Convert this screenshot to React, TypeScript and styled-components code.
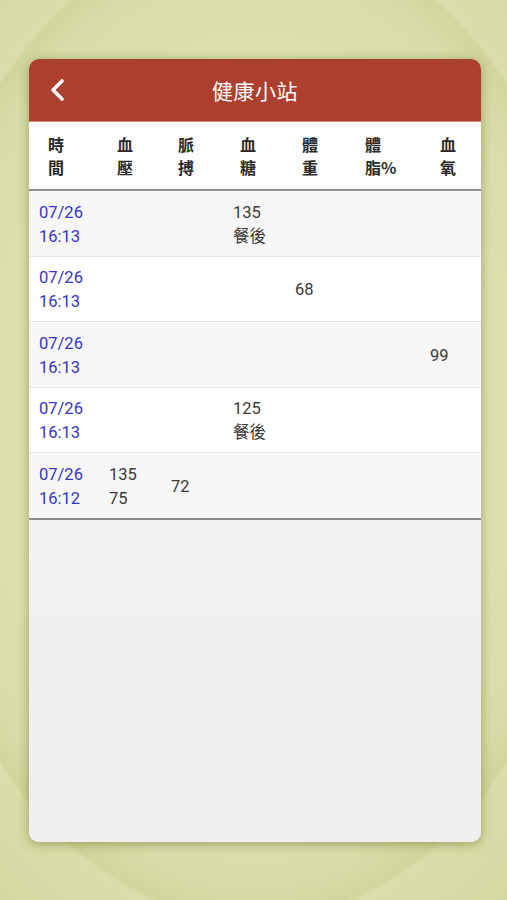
import React from 'react';
import styled, { createGlobalStyle } from 'styled-components';

const GlobalStyle = createGlobalStyle`
  html, body {
    margin: 0;
    padding: 0;
    height: 100%;
  }
  body {
    font-family: Roboto, "Noto Sans CJK TC", sans-serif;
    background-color: #d4d8a0;
    background-image: radial-gradient(
      ellipse 68% 55% at 50% 47%,
      #e3e6ba 0%,
      #dfe2b0 70%,
      #dadda9 92%,
      #d2d69d 100%,
      #dbdeaa 101%,
      #d3d79f 125%
    );
  }
`;

const Page = styled.div`
  min-height: 900px;
  box-sizing: border-box;
  padding: 59px 26px 58px 29px;
  display: flex;
`;

const Card = styled.div`
  width: 452px;
  height: 783px;
  border-radius: 10px;
  overflow: hidden;
  background: #f0f0f0;
  box-shadow: 0 2px 12px rgba(110, 120, 45, 0.6);
  display: flex;
  flex-direction: column;
`;

const TopBar = styled.div`
  height: 62px;
  flex: none;
  background: #ad3f2f;
  border-bottom: 1px solid #d98b80;
  display: grid;
  grid-template-columns: 60px 1fr 60px;
  align-items: center;
`;

const BackButton = styled.button`
  background: none;
  border: none;
  padding: 0 0 0 20px;
  display: flex;
  align-items: center;
  height: 100%;
  cursor: pointer;
`;

const Title = styled.h1`
  margin: 0;
  text-align: center;
  color: #ffffff;
  font-size: 21px;
  font-weight: 400;
  font-family: "Noto Sans CJK TC", sans-serif;
  letter-spacing: 0.5px;
`;

const columns = '70px 62px 62px 62px 62px 73px 1fr';

const HeadRow = styled.div`
  display: grid;
  grid-template-columns: ${columns};
  height: 67px;
  flex: none;
  align-items: center;
  background: #fdfdfd;
  border-bottom: 2px solid #8c8c8c;
`;

const HeadCell = styled.div<{ $pad: number }>`
  padding-left: ${p => p.$pad}px;
  font-family: "Noto Sans CJK TC", sans-serif;
  font-weight: 700;
  font-size: 16px;
  line-height: 23px;
  color: #2a2a2a;
`;

const Row = styled.div<{ $shade: boolean; $last: boolean }>`
  display: grid;
  grid-template-columns: ${columns};
  height: 64.5px;
  flex: none;
  align-items: center;
  background: ${p => (p.$shade ? '#f7f7f7' : '#ffffff')};
  border-bottom: ${p => (p.$last ? '2px solid #8c8c8c' : '1px solid #e4e4e4')};
`;

const Cell = styled.div<{ $time?: boolean }>`
  padding: 3px 0 0 10px;
  font-size: 16.5px;
  line-height: 24px;
  color: ${p => (p.$time ? '#3434c6' : '#3a3a3a')};
  font-family: Roboto, "Noto Sans CJK TC", sans-serif;
`;

const Rest = styled.div`
  flex: 1;
  background: linear-gradient(#f3f3f3 0, #f2f2f2 70px, #f0f0f0 110px);
`;

const headers: { lines: string[]; pad: number }[] = [
  { lines: ['時', '間'], pad: 19 },
  { lines: ['血', '壓'], pad: 18 },
  { lines: ['脈', '搏'], pad: 17 },
  { lines: ['血', '糖'], pad: 17 },
  { lines: ['體', '重'], pad: 17 },
  { lines: ['體', '脂%'], pad: 18 },
  { lines: ['血', '氧'], pad: 20 },
];

type Entry = { date: string; time: string; cells: (string[] | null)[] };

const entries: Entry[] = [
  { date: '07/26', time: '16:13', cells: [null, null, ['135', '餐後'], null, null, null] },
  { date: '07/26', time: '16:13', cells: [null, null, null, ['68'], null, null] },
  { date: '07/26', time: '16:13', cells: [null, null, null, null, null, ['99']] },
  { date: '07/26', time: '16:13', cells: [null, null, ['125', '餐後'], null, null, null] },
  { date: '07/26', time: '16:12', cells: [['135', '75'], ['72'], null, null, null, null] },
];

const BackIcon = () => (
  <svg width="18" height="24" viewBox="0 0 18 24">
    <path d="M13 3 L4 12 L13 21" fill="none" stroke="#ffffff" strokeWidth="3.6" strokeLinecap="round" strokeLinejoin="round" />
  </svg>
);

const App: React.FC = () => {
  return (
    <>
      <GlobalStyle />
      <Page>
        <Card>
          <TopBar>
            <BackButton aria-label="back">
              <BackIcon />
            </BackButton>
            <Title>健康小站</Title>
            <div />
          </TopBar>
          <HeadRow>
            {headers.map((h, i) => (
              <HeadCell key={i} $pad={h.pad}>
                {h.lines.map((l, j) => <div key={j}>{l}</div>)}
              </HeadCell>
            ))}
          </HeadRow>
          {entries.map((e, i) => (
            <Row key={i} $shade={i % 2 === 0} $last={i === entries.length - 1}>
              <Cell $time>
                <div>{e.date}</div>
                <div>{e.time}</div>
              </Cell>
              {e.cells.map((c, j) => (
                <Cell key={j}>{c && c.map((l, k) => <div key={k}>{l}</div>)}</Cell>
              ))}
            </Row>
          ))}
          <Rest />
        </Card>
      </Page>
    </>
  );
};

export default App;
